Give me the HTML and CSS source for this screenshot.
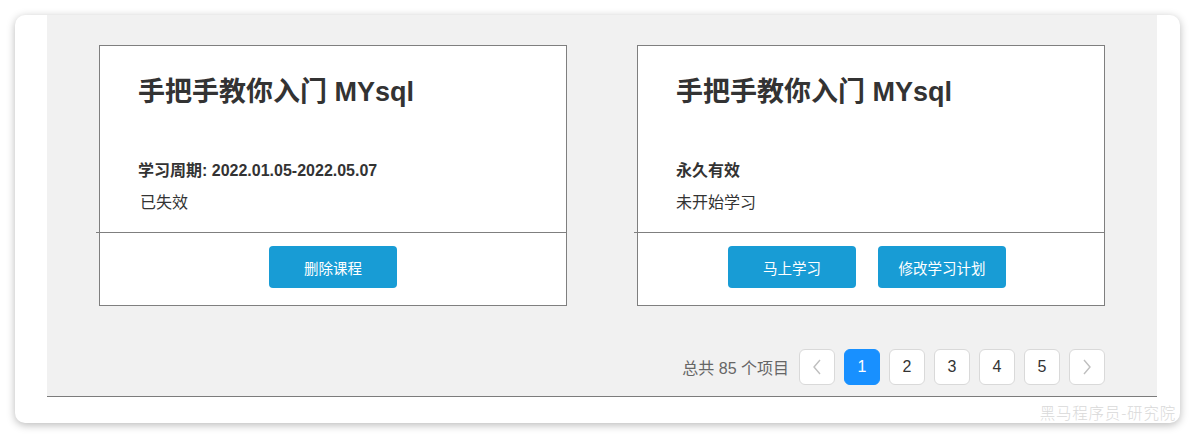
FILE: index.html
```html
<!DOCTYPE html>
<html lang="zh-CN">
<head>
<meta charset="utf-8">
<title>我的课程</title>
<link rel="stylesheet" href="styles.css">
</head>
<body>
<div class="panel">
  <div class="content">
    <div class="cards">
      <div class="card">
        <div class="card-body">
          <h2 class="title">手把手教你入门 MYsql</h2>
          <div class="period">学习周期: 2022.01.05-2022.05.07</div>
          <div class="status status-expired">已失效</div>
        </div>
        <div class="divider"></div>
        <div class="card-actions">
          <button class="btn">删除课程</button>
        </div>
      </div>
      <div class="card">
        <div class="card-body">
          <h2 class="title">手把手教你入门 MYsql</h2>
          <div class="period">永久有效</div>
          <div class="status">未开始学习</div>
        </div>
        <div class="divider"></div>
        <div class="card-actions">
          <button class="btn">马上学习</button>
          <button class="btn">修改学习计划</button>
        </div>
      </div>
    </div>
    <div class="pager">
      <span class="total">总共 85 个项目</span>
      <button class="page page-arrow" aria-label="上一页">
        <svg width="12" height="18" viewBox="0 0 12 18"><path d="M9 2 L3 9 L9 16" fill="none" stroke="#bfbfbf" stroke-width="1.4"/></svg>
      </button>
      <button class="page active">1</button>
      <button class="page">2</button>
      <button class="page">3</button>
      <button class="page">4</button>
      <button class="page">5</button>
      <button class="page page-arrow" aria-label="下一页">
        <svg width="12" height="18" viewBox="0 0 12 18"><path d="M3 2 L9 9 L3 16" fill="none" stroke="#bfbfbf" stroke-width="1.4"/></svg>
      </button>
    </div>
  </div>
  <div class="watermark">黑马程序员-研究院</div>
</div>
</body>
</html>
```

FILE: styles.css
```css
* { box-sizing: border-box; }
html, body { margin: 0; padding: 0; background: #fff; }
body {
  padding: 15px;
  font-family: "Liberation Sans", "Noto Sans CJK SC", sans-serif;
  color: #333;
}
.panel {
  position: relative;
  width: 1165px;
  height: 408px;
  background: #fff;
  border-radius: 10px;
  box-shadow: 0 2px 8px rgba(0, 0, 0, 0.28);
  padding: 0 23px 0 32px;
  overflow: hidden;
}
.content {
  background: #f1f1f1;
  border-bottom: 1px solid #7c7c7c;
  height: 382px;
  padding: 30px 52px 0;
}
.cards {
  display: flex;
  gap: 70px;
}
.card {
  width: 468px;
  height: 261px;
  background: #fff;
  border: 1px solid #7f7f7f;
  display: flex;
  flex-direction: column;
}
.card-body {
  height: 186px;
  padding: 28px 0 0 38px;
}
.title {
  margin: 0;
  font-size: 27px;
  line-height: 36px;
  font-weight: bold;
  color: #333;
}
.period {
  margin-top: 45px;
  font-size: 16px;
  line-height: 32px;
  font-weight: bold;
}
.status {
  font-size: 16px;
  line-height: 32px;
  color: #333;
}
.status-expired { padding-left: 2px; }
.divider {
  height: 1px;
  background: #7f7f7f;
  margin-left: -4px;
}
.card-actions {
  display: flex;
  justify-content: center;
  gap: 22px;
  padding-top: 13px;
  padding-right: 8px;
}
.btn {
  width: 128px;
  height: 42px;
  border: none;
  border-radius: 4px;
  background: #189cd5;
  color: #fff;
  font-family: "Liberation Sans", "Noto Sans CJK SC", sans-serif;
  font-size: 14.5px;
  cursor: pointer;
}
.card:first-child .card-actions { padding-right: 0; }
.pager {
  display: flex;
  justify-content: flex-end;
  align-items: center;
  gap: 9px;
  margin-top: 43px;
}
.total {
  font-size: 16px;
  color: #666;
  margin-right: 1px;
}
.page {
  width: 36px;
  height: 36px;
  border: 1px solid #d9d9d9;
  border-radius: 6px;
  background: #fff;
  color: #333;
  font-family: "Liberation Sans", sans-serif;
  font-size: 16px;
  display: flex;
  align-items: center;
  justify-content: center;
  padding: 0;
}
.page.active {
  background: #1890ff;
  border-color: #1890ff;
  color: #fff;
}
.watermark {
  position: absolute;
  right: 4px;
  bottom: 1px;
  font-size: 15.5px;
  letter-spacing: 0.8px;
  color: #d9d9d9;
  font-family: "Noto Sans CJK SC", sans-serif;
  font-weight: 300;
  line-height: 20px;
}
```
